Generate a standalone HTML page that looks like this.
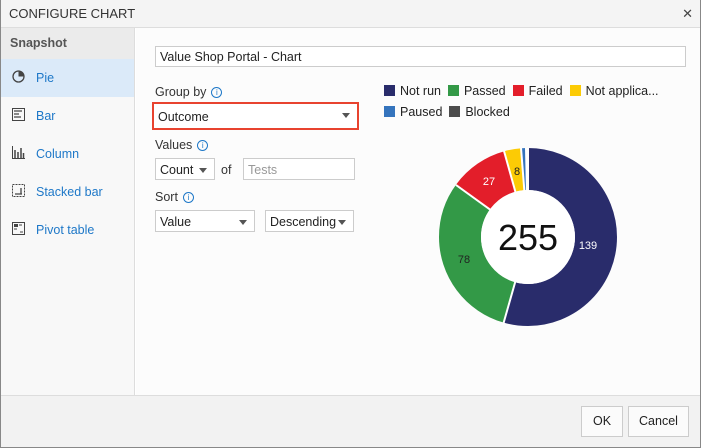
<!DOCTYPE html><html><head><style>
*{box-sizing:border-box;margin:0;padding:0}
body{width:701px;height:448px;overflow:hidden;font-family:"Segoe UI","Liberation Sans",sans-serif;font-size:12.5px;color:#222;background:#fff;position:relative}
.frame{position:absolute;left:0;top:0;width:701px;height:448px;border:1px solid #888;border-top:none}
.title{position:absolute;left:0;top:0;width:701px;height:28px;background:#f4f4f4;border-bottom:1px solid #ddd;padding:6px 9px;font-size:13px;color:#333}
.close{position:absolute;right:8px;top:6px;font-size:13px;color:#444}
.side{position:absolute;left:1px;top:28px;width:134px;height:367px;background:#f8f8f8;border-right:1px solid #ddd}
.sh{height:31px;background:#ebebeb;padding:8px 9px;font-weight:bold;color:#555}
.it{height:38px;padding:12px 10px;color:#1e78c8;position:relative;padding-left:35px}
.it.sel{background:#dbeaf9}
.ic{position:absolute;left:11px;top:11px;width:13px;height:13px}
.main{position:absolute;left:136px;top:28px;width:564px;height:367px;background:#fcfcfc}
.inp{position:absolute;border:1px solid #ccc;background:#fff;height:22px;padding:4px 4px}
.dd::after{content:"";position:absolute;right:7px;top:9px;border:4px solid transparent;border-top:5px solid #555;border-bottom:none}
.lbl{position:absolute;color:#333}
.info{display:inline-block;width:11px;height:11px;border:1px solid #1e78c8;border-radius:50%;color:#1e78c8;font-size:8px;text-align:center;line-height:9px;margin-left:5px;vertical-align:1px}
.foot{position:absolute;left:1px;top:395px;width:699px;height:52px;background:#f2f2f2;border-top:1px solid #ddd}
.btn{position:absolute;top:10px;height:31px;border:1px solid #ccc;background:#fbfbfb;text-align:center;line-height:29px}
.lg{position:absolute;font-size:12.5px}
.sw{display:inline-block;width:11px;height:11px;vertical-align:-1px;margin-right:5px}
</style></head><body>
<div class="title">CONFIGURE CHART<span class="close">✕</span></div>
<div class="side">
<div class="sh">Snapshot</div>
<div class="it sel"><svg class="ic" viewBox="0 0 13 13"><circle cx="6.5" cy="6.5" r="5.5" fill="none" stroke="#444" stroke-width="1.3"/><path d="M6.5 6.5V1A5.5 5.5 0 0 1 12 6.5Z" fill="#444"/></svg>Pie</div>
<div class="it"><svg class="ic" viewBox="0 0 13 13"><rect x="0.5" y="0.5" width="12" height="12" fill="none" stroke="#444"/><path d="M2 3h8M2 6h5M2 9h7" stroke="#444" stroke-width="1.3"/></svg>Bar</div>
<div class="it"><svg class="ic" viewBox="0 0 13 13"><path d="M0.5 0v12.5H13" fill="none" stroke="#444"/><path d="M3 12V4M6 12V6M9 12V2M11.5 12V7" stroke="#444" stroke-width="1.5"/></svg>Column</div>
<div class="it"><svg class="ic" viewBox="0 0 13 13"><rect x="0.5" y="0.5" width="12" height="12" fill="none" stroke="#444" stroke-dasharray="2 1"/><path d="M3 10h7M9 4v6" stroke="#444" stroke-width="1.3"/></svg>Stacked bar</div>
<div class="it"><svg class="ic" viewBox="0 0 13 13"><rect x="0.5" y="0.5" width="12" height="12" fill="none" stroke="#444"/><rect x="2" y="2" width="4" height="3" fill="#444"/><path d="M2 7h3M7 3h3M8 10h3" stroke="#444"/></svg>Pivot table</div>
</div>
<div class="main">
<div class="inp" style="left:19px;top:18px;width:531px;height:21px;padding:3px 4px">Value Shop Portal - Chart</div>
<div class="lbl" style="left:19px;top:57px">Group by<span class="info">i</span></div>
<div class="inp dd" style="left:16px;top:74px;width:207px;height:28px;border:2px solid #e8432f;padding:6px 4px">Outcome</div>
<div class="lbl" style="left:19px;top:110px">Values<span class="info">i</span></div>
<div class="inp dd" style="left:19px;top:130px;width:60px">Count</div>
<div class="lbl" style="left:85px;top:135px">of</div>
<div class="inp" style="left:107px;top:130px;width:112px;color:#999">Tests</div>
<div class="lbl" style="left:19px;top:162px">Sort<span class="info">i</span></div>
<div class="inp dd" style="left:19px;top:182px;width:100px">Value</div>
<div class="inp dd" style="left:129px;top:182px;width:89px">Descending</div>
</div>
<div class="lg" style="left:384px;top:84px"><span class="sw" style="background:#292c6b"></span>Not run &nbsp;<span class="sw" style="background:#339947"></span>Passed &nbsp;<span class="sw" style="background:#e31e2a"></span>Failed &nbsp;<span class="sw" style="background:#fccb05"></span>Not applica...</div>
<div class="lg" style="left:384px;top:105px"><span class="sw" style="background:#3574bd"></span>Paused &nbsp;<span class="sw" style="background:#4c4c4c"></span>Blocked</div>
<svg style="position:absolute;left:439px;top:148px" width="178" height="178" viewBox="0 0 178 178">
<g transform="rotate(-90 89 89)" fill="none" stroke-width="42">
<circle cx="89" cy="89" r="68" stroke="#292c6b" stroke-dasharray="232.9 1000"/>
<circle cx="89" cy="89" r="68" stroke="#339947" stroke-dasharray="130.7 1000" stroke-dashoffset="-232.9"/>
<circle cx="89" cy="89" r="68" stroke="#e31e2a" stroke-dasharray="45.2 1000" stroke-dashoffset="-363.6"/>
<circle cx="89" cy="89" r="68" stroke="#fccb05" stroke-dasharray="13.4 1000" stroke-dashoffset="-408.8"/>
<circle cx="89" cy="89" r="68" stroke="#3574bd" stroke-dasharray="3.3 1000" stroke-dashoffset="-422.2"/>
<circle cx="89" cy="89" r="68" stroke="#4c4c4c" stroke-dasharray="1.7 1000" stroke-dashoffset="-425.5"/>
</g>
<g stroke="#fff" stroke-width="2">
<line x1="89" y1="89" x2="89" y2="0"/>
<line x1="89" y1="89" x2="64" y2="177"/>
<line x1="89" y1="89" x2="17" y2="37"/>
<line x1="89" y1="89" x2="65" y2="3"/>
<line x1="89" y1="89" x2="82" y2="0"/>
<line x1="89" y1="89" x2="87" y2="0"/>
</g>
<circle cx="89" cy="89" r="47" fill="#fff"/>
<text x="89" y="102" text-anchor="middle" font-size="36" font-family="Liberation Sans,sans-serif" fill="#111">255</text>
<text x="149" y="101" text-anchor="middle" font-size="11" fill="#fff" font-family="Liberation Sans,sans-serif">139</text>
<text x="25" y="115" text-anchor="middle" font-size="11" fill="#222" font-family="Liberation Sans,sans-serif">78</text>
<text x="50" y="37" text-anchor="middle" font-size="11" fill="#fff" font-family="Liberation Sans,sans-serif">27</text>
<text x="78" y="27" text-anchor="middle" font-size="11" fill="#222" font-family="Liberation Sans,sans-serif">8</text>
</svg>
<div class="foot"><div class="btn" style="left:580px;width:42px">OK</div><div class="btn" style="left:627px;width:61px">Cancel</div></div>
<div class="frame"></div>
</body></html>
